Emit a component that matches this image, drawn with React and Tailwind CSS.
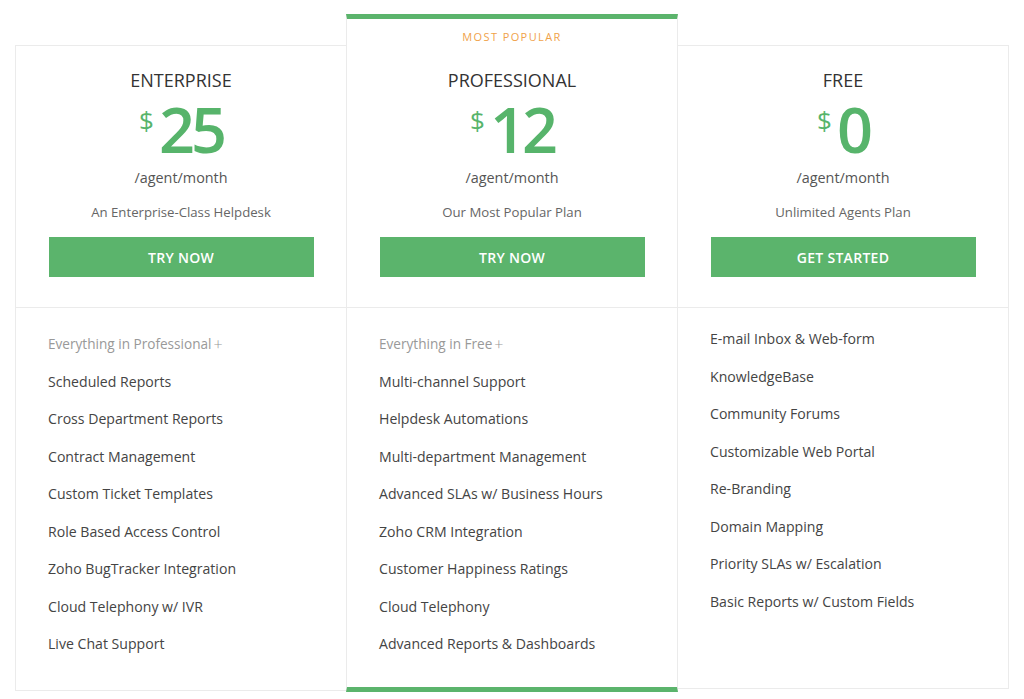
import React from 'react';

const plans = [
  {
    name: 'ENTERPRISE',
    price: '25',
    tagline: 'An Enterprise-Class Helpdesk',
    cta: 'TRY NOW',
    base: 'Everything in Professional',
    features: [
      'Scheduled Reports',
      'Cross Department Reports',
      'Contract Management',
      'Custom Ticket Templates',
      'Role Based Access Control',
      'Zoho BugTracker Integration',
      'Cloud Telephony w/ IVR',
      'Live Chat Support',
    ],
  },
  {
    name: 'PROFESSIONAL',
    price: '12',
    tagline: 'Our Most Popular Plan',
    cta: 'TRY NOW',
    base: 'Everything in Free',
    popular: true,
    features: [
      'Multi-channel Support',
      'Helpdesk Automations',
      'Multi-department Management',
      'Advanced SLAs w/ Business Hours',
      'Zoho CRM Integration',
      'Customer Happiness Ratings',
      'Cloud Telephony',
      'Advanced Reports & Dashboards',
    ],
  },
  {
    name: 'FREE',
    price: '0',
    tagline: 'Unlimited Agents Plan',
    cta: 'GET STARTED',
    features: [
      'E-mail Inbox & Web-form',
      'KnowledgeBase',
      'Community Forums',
      'Customizable Web Portal',
      'Re-Branding',
      'Domain Mapping',
      'Priority SLAs w/ Escalation',
      'Basic Reports w/ Custom Fields',
    ],
  },
];

const PlanHeader = ({ plan }) => (
  <div className="flex flex-col items-center border-b border-[#ebebeb] pb-[30px]">
    {plan.popular && (
      <div className="mt-[10px] mb-[23px] text-[11px] leading-[16px] tracking-[1.4px] text-[#f0a24a]">
        MOST POPULAR
      </div>
    )}
    <div className={`${plan.popular ? '' : 'mt-[22px]'} text-[18px] leading-[24px] text-[#333]`}>
      {plan.name}
    </div>
    <div className="mt-[5px] flex h-[64px] items-start justify-center text-[#57b46b]">
      <span className="mt-[8px] mr-[5px] text-[26px] leading-[30px]">$</span>
      <span className="text-[63px] leading-[64px] font-semibold tracking-[-4px]">{plan.price}</span>
    </div>
    <div className="mt-[7px] text-[14.4px] leading-[20px] text-[#555]">/agent/month</div>
    <div className="mt-[14px] text-[13.2px] leading-[20px] text-[#666]">{plan.tagline}</div>
    <button className="mt-[15px] h-[40px] w-[265px] bg-[#5bb46c] text-[14px] font-semibold tracking-[0.3px] text-white">
      {plan.cta}
    </button>
  </div>
);

const PlanFeatures = ({ plan }) => (
  <div className={`${plan.base ? 'pt-[17px]' : 'pt-[12px]'} px-[32px]`}>
    {plan.base && (
      <div className="flex h-[37.5px] items-center text-[13.6px] text-[#999]">
        {plan.base}
        <span className="ml-[2px] text-[16px] font-light">+</span>
      </div>
    )}
    {plan.features.map((f) => (
      <div key={f} className="flex h-[37.5px] items-center text-[14.1px] text-[#444]">
        {f}
      </div>
    ))}
  </div>
);

const App = () => {
  const [enterprise, professional, free] = plans;
  return (
    <div
      className="flex min-h-[699px] items-start bg-white pl-[15px] pt-[14px]"
      style={{ fontFamily: '"Open Sans", "Noto Sans", sans-serif' }}
    >
      <div className="mt-[31px] h-[646px] w-[331px] border-y border-l border-[#ebebeb]">
        <PlanHeader plan={enterprise} />
        <PlanFeatures plan={enterprise} />
      </div>
      <div className="h-[678px] w-[332px] border-x border-y-[5px] border-x-[#ebebeb] border-y-[#5bb46c]">
        <PlanHeader plan={professional} />
        <PlanFeatures plan={professional} />
      </div>
      <div className="mt-[31px] h-[644px] w-[331px] border-y border-r border-[#ebebeb]">
        <PlanHeader plan={free} />
        <PlanFeatures plan={free} />
      </div>
    </div>
  );
};

export default App;
